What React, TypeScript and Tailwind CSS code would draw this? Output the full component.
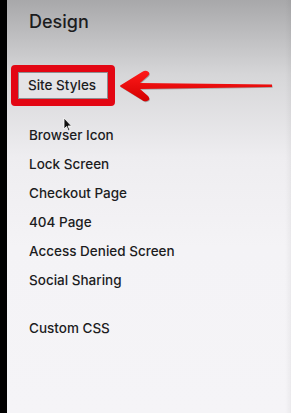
const items = ['Browser Icon', 'Lock Screen', 'Checkout Page', '404 Page', 'Access Denied Screen', 'Social Sharing']

export default function App() {
  return (
    <div className="flex h-[413px] w-[291px] overflow-hidden bg-black font-['Inter',sans-serif]">
      <div className="w-[7px] shrink-0 bg-black" />
      <div className="relative flex flex-1 flex-col bg-[linear-gradient(to_bottom,#a8a8aa_0%,#d6d6d8_18%,#eeedf0_38%,#f4f3f6_60%,#f5f4f7_100%)] pl-[22px]">
        <div className="pointer-events-none absolute top-0 right-0 h-full w-[6px] bg-[linear-gradient(to_right,rgba(0,0,0,0),rgba(0,0,0,0.04))]" />
        <h1 className="mt-[12px] text-[18px] leading-[20px] font-medium text-[#1c1c1e]">Design</h1>

        <div className="relative mt-[33px] -ml-[18px] flex items-center">
          <div className="rounded-[4px] border-[7px] border-[#e30613]">
            <div className="flex h-[27px] w-[90px] items-center border border-[#8e8e92] bg-[#e4e3e6] pl-[9px] text-[13.5px] font-medium text-[#1c1c1e]">
              Site Styles
            </div>
          </div>
          <svg className="ml-[3px]" width="156" height="34" viewBox="0 0 156 34">
            <defs>
              <linearGradient id="ar" x1="0" y1="0" x2="0" y2="1">
                <stop offset="0" stopColor="#ff1a1a" />
                <stop offset="1" stopColor="#d40000" />
              </linearGradient>
            </defs>
            <path d="M154 15.6 L154 18 L22 20 L30 27 Q33 31 29 32 Q26 33 24 31 L3 18 Q1 17 3 16 L24 3 Q27 1 29 2 Q33 4 30 7 L22 14 Z" fill="#6b6b6b" opacity="0.5" transform="translate(0.6 0.8)" />
            <path d="M154 15.6 L154 18 L22 20 L30 27 Q33 31 29 32 Q26 33 24 31 L3 18 Q1 17 3 16 L24 3 Q27 1 29 2 Q33 4 30 7 L22 14 Z" fill="url(#ar)" />
          </svg>
        </div>

        <svg className="mt-[11px] ml-[34px]" width="10" height="15" viewBox="0 0 10 15">
          <path d="M1 1 L1 12 L3.5 9.5 L5.5 14 L7 13.3 L5 9 L8.5 9 Z" fill="#111" stroke="#fff" strokeWidth="0.8" />
        </svg>

        <ul className="-mt-[11px] flex flex-col text-[13.5px] leading-[29px] font-medium text-[#1c1c1e]">
          {items.map((item) => (
            <li key={item}>{item}</li>
          ))}
          <li className="mt-[19px]">Custom CSS</li>
        </ul>
      </div>
    </div>
  )
}
